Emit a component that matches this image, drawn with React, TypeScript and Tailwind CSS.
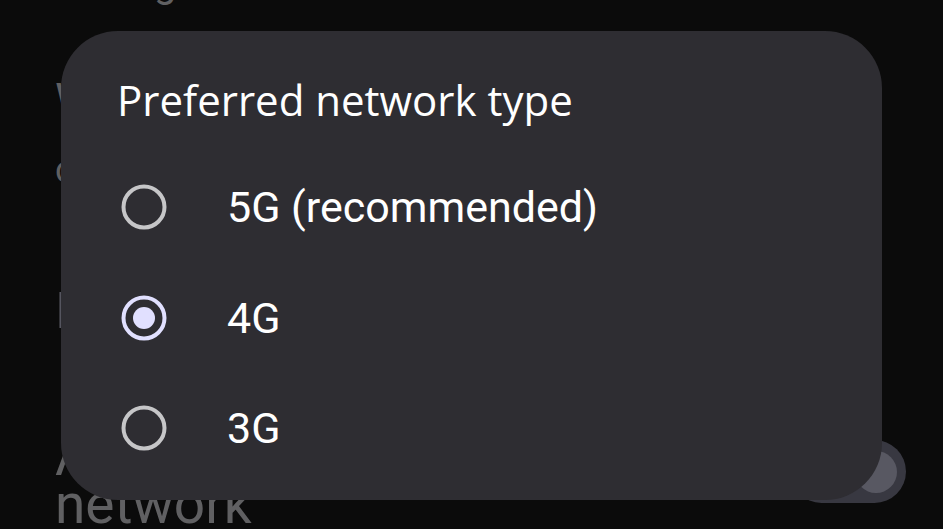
import { useState } from "react";

const options = ["5G (recommended)", "4G", "3G"];

function Radio({ checked }: { checked: boolean }) {
  return (
    <svg width="48" height="48" viewBox="0 0 48 48">
      <circle cx="24" cy="24" r="20.5" fill="none" stroke={checked ? "#e1e0ff" : "#c6c6c8"} strokeWidth="4" />
      {checked && <circle cx="24" cy="24" r="11" fill="#e1e0ff" />}
    </svg>
  );
}

export default function App() {
  const [value, setValue] = useState("4G");

  return (
    <div className="relative w-[943px] h-[529px] overflow-hidden bg-[#0b0b0b] font-['Roboto',sans-serif]">
      {/* settings page behind the scrim */}
      <div className="flex flex-col pl-[55px] text-[#606062] whitespace-nowrap">
        <div className="-mt-[38px] h-[44px] text-[40px] leading-[44px]">Calling</div>
        <div className="mt-[67px] text-[46px] leading-[54px]">Wi-Fi calling</div>
        <div className="mt-[23px] text-[36px] leading-[40px]">calls over Wi-Fi</div>
        <div className="mt-[94px] text-[50px] leading-[54px] text-[#55555f]">I</div>
        <div className="mt-[94px] flex items-end justify-between pr-[37px]">
          <div className="flex flex-col text-[55px] leading-[48px]">
            <span>Automatically select</span>
            <span>network</span>
          </div>
          <div className="flex items-center w-[116px] h-[63px] rounded-full bg-[#383841] justify-end pr-[9px] mb-[25px]">
            <div className="w-[42px] h-[42px] rounded-full bg-[#585862]" />
          </div>
        </div>
      </div>

      {/* dialog */}
      <div className="absolute left-[61px] top-[31px] w-[821px] h-[469px] rounded-[57px] bg-[#2e2d32] flex flex-col">
        <div className="pl-[56px] pt-[44px] text-[42px] leading-[50px] text-white font-['Open_Sans',sans-serif]">
          Preferred network type
        </div>
        <div className="flex flex-col mt-[27px]">
          {options.map((o) => (
            <button
              key={o}
              onClick={() => setValue(o)}
              className="flex items-center h-[110.5px] pl-[59px] text-left"
            >
              <Radio checked={value === o} />
              <span className="ml-[59px] text-[43px] text-white">{o}</span>
            </button>
          ))}
        </div>
      </div>
    </div>
  );
}
